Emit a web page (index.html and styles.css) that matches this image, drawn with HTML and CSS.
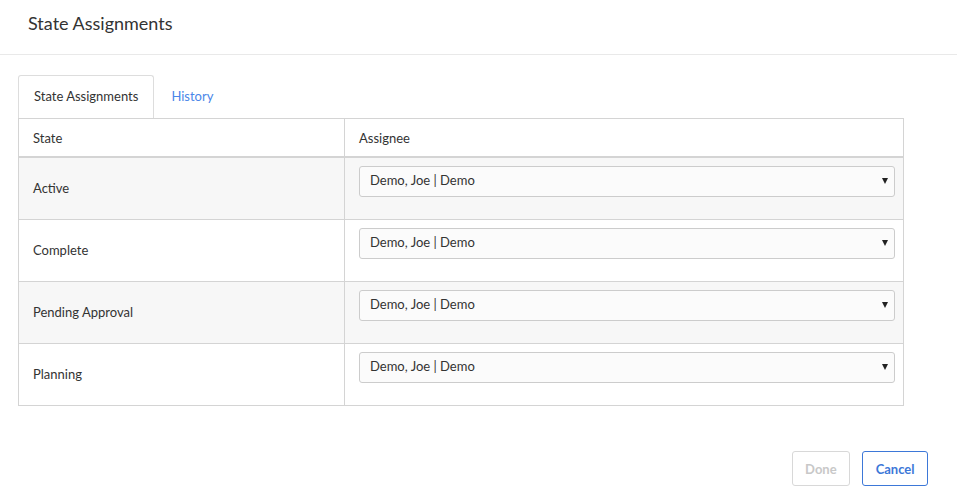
FILE: index.html
```html
<!DOCTYPE html>
<html lang="en">
<head>
    <meta charset="UTF-8">
    <title>State Assignments</title>
    <link rel="stylesheet" href="styles.css">
</head>
<body>

<div class="dialog">
    <div class="dialog-header">
        <h1>State Assignments</h1>
    </div>

    <div class="dialog-body">
        <ul class="tabs">
            <li class="tab active">State Assignments</li>
            <li class="tab">History</li>
        </ul>

        <table class="grid">
            <thead>
                <tr>
                    <th class="col-state">State</th>
                    <th>Assignee</th>
                </tr>
            </thead>
            <tbody>
                <tr>
                    <td>Active</td>
                    <td><div class="select">Demo, Joe | Demo<span class="caret"></span></div></td>
                </tr>
                <tr>
                    <td>Complete</td>
                    <td><div class="select">Demo, Joe | Demo<span class="caret"></span></div></td>
                </tr>
                <tr>
                    <td>Pending Approval</td>
                    <td><div class="select">Demo, Joe | Demo<span class="caret"></span></div></td>
                </tr>
                <tr>
                    <td>Planning</td>
                    <td><div class="select">Demo, Joe | Demo<span class="caret"></span></div></td>
                </tr>
            </tbody>
        </table>
    </div>

    <div class="dialog-footer">
        <button class="btn btn-disabled">Done</button>
        <button class="btn btn-primary">Cancel</button>
    </div>
</div>

</body>
</html>
```

FILE: styles.css
```css
body {
    margin: 0;
    font-family: Lato, "Open Sans", sans-serif;
    color: #333;
    background-color: #fff;
}

.dialog {
    width: 957px;
    height: 494px;
    display: flex;
    flex-direction: column;
}

.dialog-header {
    height: 55px;
    box-sizing: border-box;
    border-bottom: 1px solid #e9e9e9;
    padding: 12px 28px 0;
}

.dialog-header h1 {
    margin: 0;
    font-size: 18px;
    font-weight: normal;
    color: #333;
}

.dialog-body {
    padding: 20px 53px 0 18px;
}

.tabs {
    list-style: none;
    margin: 0;
    padding: 0;
    display: flex;
}

.tab {
    height: 43px;
    padding: 0 15px 3px;
    box-sizing: border-box;
    display: flex;
    align-items: center;
    font-size: 13px;
    color: #4a86e8;
    border: 1px solid transparent;
    border-bottom: none;
    margin-right: 1px;
}

.tab.active {
    color: #333;
    border-color: #ddd;
    border-radius: 3px 3px 0 0;
}

.grid {
    width: 100%;
    border-collapse: collapse;
    border: 1px solid #d4d4d4;
    font-size: 13px;
}

.grid th {
    text-align: left;
    font-weight: normal;
    height: 37px;
    padding: 0 14px;
    border-bottom: 2px solid #d4d4d4;
    border-left: 1px solid #d4d4d4;
}

.grid .col-state {
    width: 297px;
}

.grid td {
    height: 59px;
    padding: 0 8px 2px 14px;
    border-top: 1px solid #d4d4d4;
    border-left: 1px solid #d4d4d4;
    vertical-align: middle;
}

.grid td + td {
    height: auto;
    vertical-align: top;
    padding: 8px 8px 0 14px;
}

.grid tbody tr:nth-child(odd) {
    background-color: #f7f7f7;
}

.select {
    position: relative;
    height: 31px;
    line-height: 27px;
    padding: 0 10px 2px;
    box-sizing: border-box;
    border: 1px solid #ccc;
    border-radius: 3px;
    background-color: #fbfbfb;
    font-size: 13px;
}

.caret {
    position: absolute;
    right: 6px;
    top: 11px;
    border-left: 3.5px solid transparent;
    border-right: 3.5px solid transparent;
    border-top: 6px solid #222;
}

.dialog-footer {
    margin-top: auto;
    display: flex;
    justify-content: flex-end;
    gap: 12px;
    padding: 0 29px 8px 0;
}

.btn {
    height: 35px;
    padding: 0 12.5px;
    font-family: inherit;
    font-size: 13px;
    font-weight: bold;
    background-color: #fff;
    border-radius: 3px;
}

.btn-disabled {
    color: #c8c8c8;
    border: 1px solid #d8d8d8;
}

.btn-primary {
    color: #3d78d8;
    border: 1px solid #3d78d8;
}
```
